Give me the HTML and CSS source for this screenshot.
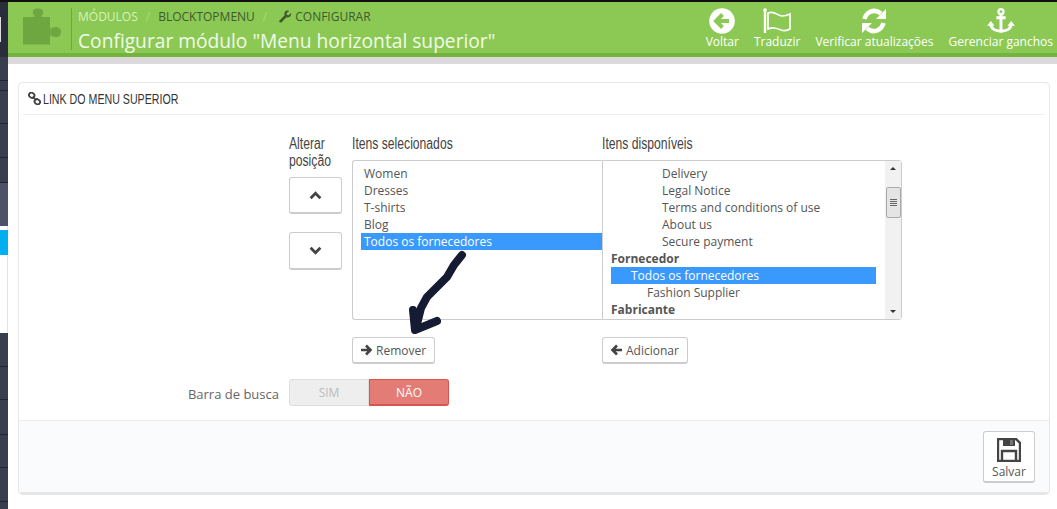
FILE: index.html
```html
<!DOCTYPE html>
<html lang="pt">
<head>
<meta charset="utf-8">
<title>Configurar módulo</title>
<link rel="stylesheet" href="styles.css">
</head>
<body>
<div class="topline"></div>
<div class="app">
  <aside class="sidebar">
    <div class="side-head"><div class="side-logo"></div></div>
    <div class="side-item h24"></div>
    <div class="side-item h10"></div>
    <div class="side-item h33"></div>
    <div class="side-item h34"></div>
    <div class="side-item h25"></div>
    <div class="side-item h43"></div>
    <div class="side-active"></div>
    <div class="side-item h34"></div>
    <div class="side-item h33"></div>
    <div class="side-item h35"></div>
    <div class="side-item h33"></div>
    <div class="side-item h34"></div>
  </aside>
  <main class="main">
    <header class="pagehead">
      <svg class="puzzle" viewBox="0 0 40 37"><path d="M1 9h10c2 0 2-1 1-2-2-2-2-6.500 4-6.500s6 4.500 4 6.500c-1 1-1 2 1 2h7v10c0 2 1 2 2 1 3-2 9-1.500 9 4s-6 6-9 4c-1-1-2-1-2 1v7.500H1z" fill="#6ea63f"/></svg>
      <div class="titles">
        <div class="crumbs"><span class="crumb-light">MÓDULOS</span><span class="sep">/</span><span>BLOCKTOPMENU</span><span class="sep">/</span><span class="crumb-cfg"><svg class="wrench" viewBox="0 0 14 14"><path d="M13 3.200 10.400 5.600 8.500 5.300 8.200 3.500 10.800 1C8.600 0 6.200 1.200 5.800 3.500 5.700 4.400 5.800 5 6.100 5.700L.8 11c-.7.7-.7 1.500-.1 2.100s1.500.6 2.100 0L8 7.700c2.700 1 5.700-1.200 5-4.500z" fill="#3f5a2c"/></svg>CONFIGURAR</span></div>
        <h1 class="title">Configurar módulo "Menu horizontal superior"</h1>
      </div>
      <nav class="toolbar">
        <a class="tool"><svg viewBox="0 0 30 26"><circle cx="15" cy="13" r="12.800" fill="#fff"/><path d="M22 13H10M15.500 6.500 9 13l6.500 6.500" fill="none" stroke="#8bc954" stroke-width="4"/></svg><span>Voltar</span></a>
        <a class="tool t-gap"><svg viewBox="0 0 30 26"><path d="M3 2v23" stroke="#fff" stroke-width="2.400"/><circle cx="3" cy="2" r="1.800" fill="#fff"/><path d="M6 5c7-3 9 3 14 3 3 0 6-1 8-2v15c-3 2-6 2-9 1-5-2-8-3-13-1z" fill="none" stroke="#fff" stroke-width="1.700"/></svg><span>Traduzir</span></a>
        <a class="tool t-gap"><svg viewBox="0 0 26 26"><path d="M3.500 11C5 5 12-.5 20 5.500" fill="none" stroke="#fff" stroke-width="4.500"/><path d="M25 1v10H15z" fill="#fff"/><path d="M22.500 15C21 21 14 26.500 6 20.500" fill="none" stroke="#fff" stroke-width="4.500"/><path d="M1 25V15h10z" fill="#fff"/></svg><span>Verificar atualizações</span></a>
        <a class="tool t-gap"><svg viewBox="0 0 30 28"><circle cx="15" cy="4" r="2.700" fill="none" stroke="#fff" stroke-width="2.400"/><path d="M15 7v19M10 10.500h10" stroke="#fff" stroke-width="3.200" fill="none"/><path d="M4 17c0 6 6 8 11 8s11-2 11-8" fill="none" stroke="#fff" stroke-width="3.200"/><path d="M0 19l4-5 4 5zM22 19l4-5 4 5z" fill="#fff"/></svg><span>Gerenciar ganchos</span></a>
      </nav>
    </header>
    <div class="band"></div>
    <div class="content">
      <section class="panel">
        <div class="panel-head"><svg class="link-ic" viewBox="0 0 14 14"><g fill="none" stroke="#444" stroke-width="2"><rect x="1" y="1" width="6" height="5" rx="2.400" transform="rotate(40 4 3.500)"/><rect x="7" y="8" width="6" height="5" rx="2.400" transform="rotate(40 10 10.500)"/><path d="M5 5l4 4"/></g></svg><span class="narrow head-text">LINK DO MENU SUPERIOR</span></div>
        <div class="selector">
          <div class="pos-col">
            <div class="col-title"><span class="narrow">Alterar posição</span></div>
            <button class="move m-up"><svg viewBox="0 0 12 8"><path d="M1.500 6.500 6 2l4.500 4.500" fill="none" stroke="#444" stroke-width="2.600"/></svg></button>
            <button class="move m-down"><svg viewBox="0 0 12 8"><path d="M1.500 1.500 6 6l4.500-4.500" fill="none" stroke="#444" stroke-width="2.600"/></svg></button>
          </div>
          <div class="list-col first">
            <div class="col-title"><span class="narrow">Itens selecionados</span></div>
            <div class="listbox lb-left">
              <div class="opt">Women</div>
              <div class="opt">Dresses</div>
              <div class="opt">T-shirts</div>
              <div class="opt">Blog</div>
              <div class="opt sel">Todos os fornecedores</div>
            </div>
            <button class="btn"><svg class="btn-ic" viewBox="0 0 13 12"><path d="M1 6h9M6 1.500 10.500 6 6 10.500" fill="none" stroke="#444" stroke-width="2.600"/></svg>Remover</button>
          </div>
          <div class="list-col second">
            <div class="col-title"><span class="narrow">Itens disponíveis</span></div>
            <div class="listbox lb-right">
              <div class="opts">
                <div class="opt i3">Delivery</div>
                <div class="opt i3">Legal Notice</div>
                <div class="opt i3">Terms and conditions of use</div>
                <div class="opt i3">About us</div>
                <div class="opt i3">Secure payment</div>
                <div class="opt group">Fornecedor</div>
                <div class="opt i1 sel">Todos os fornecedores</div>
                <div class="opt i2">Fashion Supplier</div>
                <div class="opt group">Fabricante</div>
              </div>
              <div class="scrollbar">
                <span class="arrow-up"></span>
                <span class="thumb"><i></i><i></i><i></i><i></i></span>
                <span class="arrow-down"></span>
              </div>
            </div>
            <button class="btn"><svg class="btn-ic" viewBox="0 0 13 12"><path d="M12 6H3M7 1.500 2.500 6 7 10.500" fill="none" stroke="#444" stroke-width="2.600"/></svg>Adicionar</button>
          </div>
          <svg class="scribble" viewBox="0 0 60 84"><path d="M54 5 46 15 39 27 29 37 19 47 13 58 8 78M5 60 7 80 29 71" fill="none" stroke="#141b33" stroke-width="8" stroke-linecap="round" stroke-linejoin="round"/></svg>
        </div>
        <div class="search-row">
          <label class="search-label">Barra de busca</label>
          <div class="switch"><span class="sw-off">SIM</span><span class="sw-on">NÃO</span></div>
        </div>
        <div class="panel-foot">
          <button class="save"><svg viewBox="0 0 24 24"><path d="M1 1h18l4 4v18H1z" fill="none" stroke="#444" stroke-width="2.400"/><path d="M6 1h12v7H6z" fill="#444"/><rect x="13" y="2" width="3" height="5" fill="#fff" opacity=".25"/><path d="M5 22v-9h14v9" fill="none" stroke="#444" stroke-width="2.400"/></svg><span>Salvar</span></button>
        </div>
      </section>
    </div>
  </main>
</div>
</body>
</html>
```
FILE: styles.css
```css
* { box-sizing: border-box; }
html, body { margin: 0; padding: 0; background: #fff; }
body { width: 1057px; height: 509px; overflow: hidden; font-family: "Open Sans", "Liberation Sans", sans-serif; color: #555; }
.topline { height: 2px; background: #111; }
.app { display: flex; height: 507px; }

.sidebar { width: 8px; flex: none; background: #393e4f; display: flex; flex-direction: column; }
.side-head { height: 55px; background: #2a2e3b; padding-top: 15px; }
.side-logo { width: 1px; height: 25px; background: #ddd; }
.side-item { border-bottom: 1px solid #23262f; flex: none; }
.h10 { height: 10px; }
.h24 { height: 24px; }
.h25 { height: 25px; }
.h33 { height: 33px; }
.h34 { height: 34px; }
.h35 { height: 35px; }
.h43 { height: 43px; background: #4c5268; border-bottom: 0; }
.side-active { height: 107px; background: #fff; padding-top: 4px; border-right: 1px solid #e4e4e4; }
.side-active::before { content: ""; display: block; width: 8px; height: 25px; background: #00aff0; }

.main { flex: 1; min-width: 0; }
.pagehead { height: 55px; background: #8bc954; border-bottom: 4px solid #72b43d; display: flex; padding: 6px 0 0 14px; }
.puzzle { width: 40px; height: 37px; flex: none; }
.titles { margin-left: 9px; border-left: 1px solid #6ea63f; height: 42px; padding-left: 6px; flex: none; }
.crumbs { display: flex; align-items: center; font-size: 12px; line-height: 17px; color: #3f5a2c; }
.crumb-light { color: #d5f2be; }
.sep { margin: 0 8px; color: #a5dc7c; }
.crumb-cfg { display: flex; align-items: center; margin-left: 4px; }
.wrench { width: 13px; height: 13px; margin-right: 3px; }
.title { margin: 3px 0 0; font-size: 19.200px; line-height: 26px; font-weight: 400; color: #f1fbe9; white-space: nowrap; }
.toolbar { margin-left: auto; display: flex; padding-right: 4px; }
.tool { display: flex; flex-direction: column; align-items: center; color: #fff; font-size: 12px; line-height: 14px; white-space: nowrap; }
.tool svg { height: 26px; width: 30px; margin-bottom: 1px; }
.t-gap { margin-left: 15px; }

.band { height: 7px; background: #dcd9dc; }
.content { padding: 18px 7px 0 10px; }
.panel { height: 413px; border: 1px solid #e6e6e6; border-bottom-width: 3px; border-radius: 5px; display: flex; flex-direction: column; position: relative; }
.panel-head { margin: 0 4px; height: 32px; border-bottom: 1px solid #eee; display: flex; align-items: center; color: #333; }
.link-ic { width: 13px; height: 13px; margin: 0 2px 0 5px; flex: none; }
.narrow { display: block; font-family: "Liberation Sans", sans-serif; transform: scaleX(.76); transform-origin: left center; width: 132%; }
.head-text { font-size: 14px; white-space: nowrap; width: auto; flex: none; }

.selector { display: flex; padding: 20px 0 0 270px; position: relative; height: 249px; flex: none; }
.pos-col { width: 53px; margin-right: 10px; flex: none; display: flex; flex-direction: column; }
.col-title { font-size: 16px; line-height: 17px; color: #444; }
.pos-col .col-title { height: 42px; }
.list-col .col-title { height: 25px; }
.move { width: 53px; height: 37px; background: #fff; border: 1px solid #ccc; border-bottom-width: 2px; border-radius: 3px; padding: 0; display: flex; align-items: center; justify-content: center; }
.move svg { width: 13px; height: 9px; }
.m-up { margin-bottom: 18px; }
.m-down { height: 38px; }
.list-col.first { width: 250px; flex: none; }
.list-col.second { width: 300px; flex: none; }
.listbox { height: 160px; border: 1px solid #ccc; background: #fff; font-size: 12px; line-height: 17px; color: #555; }
.lb-left { padding: 4px 0 0 8px; border-right: 0; border-radius: 3px 0 0 3px; }
.lb-left .opt { padding-left: 3px; }
.lb-right { display: flex; border-radius: 0 3px 3px 0; }
.opts { flex: 1; padding: 4px 9px 0 8px; overflow: hidden; }
.opt { height: 17px; white-space: nowrap; }
.opt.sel { background: #3a99fc; color: #fff; }
.opt.group { font-weight: 700; }
.i1 { padding-left: 20px; }
.i2 { padding-left: 36px; }
.i3 { padding-left: 51px; }
.scrollbar { width: 16px; background: #f1f1f1; display: flex; flex-direction: column; align-items: center; position: relative; flex: none; }
.arrow-up { margin-top: 6px; width: 0; height: 0; border: 3px solid transparent; border-top: 0; border-bottom: 3px solid #333; }
.thumb { margin-top: 17px; width: 15px; height: 31px; background: #e4e4e4; border: 1px solid #aaa; border-radius: 2px; display: flex; flex-direction: column; align-items: center; justify-content: center; gap: 1px; }
.thumb i { display: block; width: 7px; height: 1px; background: #666; }
.arrow-down { margin-top: auto; margin-bottom: 6px; width: 0; height: 0; border: 3px solid transparent; border-bottom: 0; border-top: 3px solid #333; }
.btn { margin-top: 17px; height: 27px; display: inline-flex; align-items: center; padding: 0 8px 0 7px; background: #fff; border: 1px solid #ccc; border-bottom-width: 2px; border-radius: 3px; font: 12px "Open Sans", sans-serif; color: #555; }
.btn-ic { width: 13px; height: 12px; margin-right: 3px; }
.scribble { position: absolute; left: 389px; top: 135px; width: 60px; height: 84px; }

.search-row { display: flex; align-items: center; height: 27px; margin-top: 15px; flex: none; }
.search-label { width: 260px; padding-top: 2px; text-align: right; font-size: 13px; color: #666; }
.switch { margin-left: 10px; width: 160px; height: 27px; display: flex; font-size: 12px; }
.sw-off, .sw-on { width: 80px; display: flex; align-items: center; justify-content: center; }
.sw-off { background: #eee; border: 1px solid #ddd; border-radius: 3px 0 0 3px; color: #bbb; }
.sw-on { background: #e37c75; border: 1px solid #d9534f; border-bottom-width: 2px; border-radius: 0 3px 3px 0; color: #fff; }

.panel-foot { margin-top: 14px; flex: 1; background: #fafbfc; border-top: 1px solid #eee; display: flex; justify-content: flex-end; padding: 10px 14px 0 0; }
.save { width: 52px; height: 52px; background: #fff; border: 1px solid #ccc; border-bottom-width: 2px; border-radius: 3px; padding: 6px 0 0; display: flex; flex-direction: column; align-items: center; font: 12px/14px "Open Sans", sans-serif; color: #555; }
.save svg { width: 24px; height: 24px; margin-bottom: 3px; }
```
